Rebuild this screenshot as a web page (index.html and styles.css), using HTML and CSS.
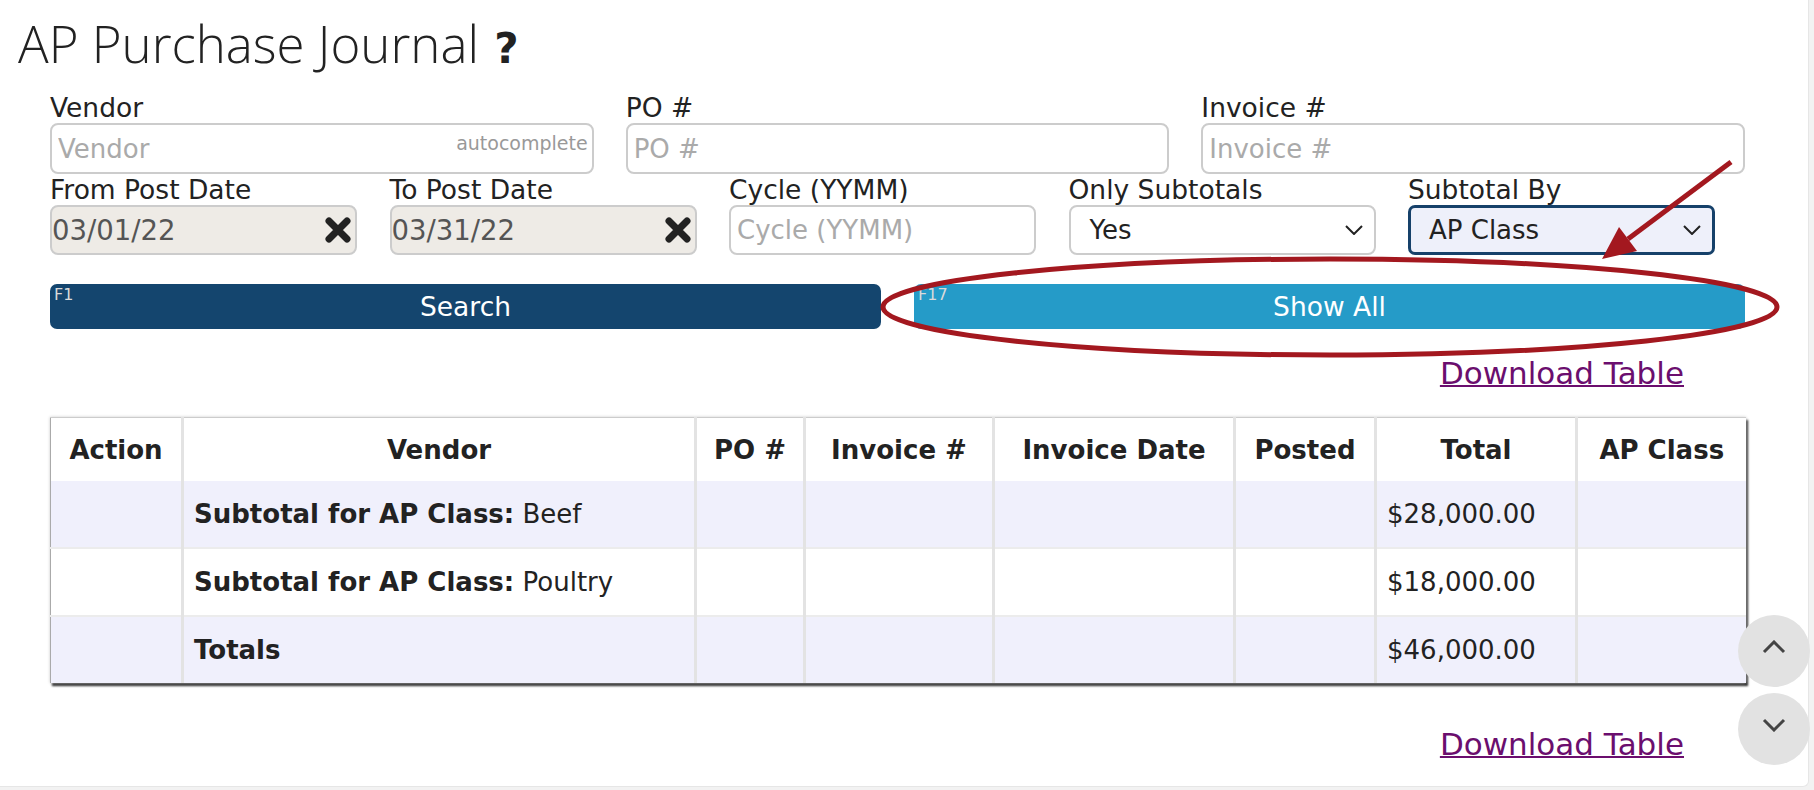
FILE: index.html
```html
<!DOCTYPE html>
<html lang="en">
<head>
    <meta charset="UTF-8">
    <meta name="viewport" content="width=device-width, initial-scale=1.0">
    <title>AP Purchase Journal</title>
    <link rel="stylesheet" href="styles.css">
</head>
<body>
    <div class="page">
        <h1 class="page-title">AP Purchase Journal <span class="help">?</span></h1>

        <form class="filters">
            <div class="row row-3">
                <div class="field">
                    <label for="vendor">Vendor</label>
                    <div class="input-wrap">
                        <input class="input" type="text" id="vendor" placeholder="Vendor">
                        <span class="hint">autocomplete</span>
                    </div>
                </div>
                <div class="field">
                    <label for="po">PO #</label>
                    <input class="input" type="text" id="po" placeholder="PO #">
                </div>
                <div class="field">
                    <label for="invoice">Invoice #</label>
                    <input class="input" type="text" id="invoice" placeholder="Invoice #">
                </div>
            </div>

            <div class="row row-5">
                <div class="field">
                    <label for="from">From Post Date</label>
                    <div class="input-wrap">
                        <input class="input date" type="text" id="from" value="03/01/22">
                        <svg class="clear" width="28" height="26" viewBox="0 0 28 26"><path d="M5 4 L23 22 M23 4 L5 22" stroke="#222" stroke-width="7" stroke-linecap="round"/></svg>
                    </div>
                </div>
                <div class="field">
                    <label for="to">To Post Date</label>
                    <div class="input-wrap">
                        <input class="input date" type="text" id="to" value="03/31/22">
                        <svg class="clear" width="28" height="26" viewBox="0 0 28 26"><path d="M5 4 L23 22 M23 4 L5 22" stroke="#222" stroke-width="7" stroke-linecap="round"/></svg>
                    </div>
                </div>
                <div class="field">
                    <label for="cycle">Cycle (YYMM)</label>
                    <input class="input" type="text" id="cycle" placeholder="Cycle (YYMM)">
                </div>
                <div class="field">
                    <label>Only Subtotals</label>
                    <div class="select">
                        <span>Yes</span>
                        <svg width="18" height="10" viewBox="0 0 18 10"><path d="M1 1 L9 9 L17 1" fill="none" stroke="#222" stroke-width="2"/></svg>
                    </div>
                </div>
                <div class="field">
                    <label>Subtotal By</label>
                    <div class="select select-active">
                        <span>AP Class</span>
                        <svg width="18" height="10" viewBox="0 0 18 10"><path d="M1 1 L9 9 L17 1" fill="none" stroke="#222" stroke-width="2"/></svg>
                    </div>
                </div>
            </div>

            <div class="buttons">
                <button type="button" class="btn btn-search"><span class="key">F1</span>Search</button>
                <button type="button" class="btn btn-show"><span class="key">F17</span>Show All</button>
            </div>
        </form>

        <div class="download"><a href="#">Download Table</a></div>

        <table class="journal">
            <colgroup>
                <col style="width: 132px">
                <col style="width: 513px">
                <col style="width: 109px">
                <col style="width: 189px">
                <col style="width: 241px">
                <col style="width: 141px">
                <col style="width: 201px">
                <col style="width: 169px">
            </colgroup>
            <thead>
                <tr>
                    <th>Action</th>
                    <th>Vendor</th>
                    <th>PO #</th>
                    <th>Invoice #</th>
                    <th>Invoice Date</th>
                    <th>Posted</th>
                    <th>Total</th>
                    <th>AP Class</th>
                </tr>
            </thead>
            <tbody>
                <tr class="shaded">
                    <td></td>
                    <td><b>Subtotal for AP Class:</b> Beef</td>
                    <td></td><td></td><td></td><td></td>
                    <td>$28,000.00</td>
                    <td></td>
                </tr>
                <tr>
                    <td></td>
                    <td><b>Subtotal for AP Class:</b> Poultry</td>
                    <td></td><td></td><td></td><td></td>
                    <td>$18,000.00</td>
                    <td></td>
                </tr>
                <tr class="shaded">
                    <td></td>
                    <td><b>Totals</b></td>
                    <td></td><td></td><td></td><td></td>
                    <td>$46,000.00</td>
                    <td></td>
                </tr>
            </tbody>
        </table>

        <div class="download download-bottom"><a href="#">Download Table</a></div>
    </div>

    <!-- red markup drawn over the screenshot -->
    <svg class="markup" width="1814" height="790" viewBox="0 0 1814 790">
        <ellipse cx="1330" cy="307" rx="447" ry="48" fill="none" stroke="#a3181f" stroke-width="5"/>
        <line x1="1731" y1="162" x2="1628" y2="239" stroke="#a3181f" stroke-width="5"/>
        <polygon points="1602,259 1637,251 1619,227" fill="#a3181f"/>
    </svg>

    <div class="scroll-btns">
        <div class="scroll-btn">
            <svg width="24" height="14" viewBox="0 0 24 14"><path d="M2 12 L12 2 L22 12" fill="none" stroke="#444" stroke-width="3"/></svg>
        </div>
        <div class="scroll-btn">
            <svg width="24" height="14" viewBox="0 0 24 14"><path d="M2 2 L12 12 L22 2" fill="none" stroke="#444" stroke-width="3"/></svg>
        </div>
    </div>
</body>
</html>
```

FILE: styles.css
```css
body {
    margin: 0;
    background-color: #f2f2f2;
    font-family: "DejaVu Sans", Verdana, sans-serif;
    color: #222;
    position: relative;
}

.page {
    background-color: #fff;
    width: 1809px;
    height: 787px;
    box-sizing: border-box;
    padding-top: 7px;
    border-radius: 0 0 6px 0;
    border-right: 1px solid #e6e6e6;
    border-bottom: 1px solid #e6e6e6;
}

.page-title {
    margin: 0 0 8px 18px;
    font-family: "Open Sans", sans-serif;
    font-weight: 300;
    font-size: 51px;
    line-height: 72px;
    color: #222;
}

.help {
    font-family: "DejaVu Sans", sans-serif;
    font-weight: bold;
    font-size: 42px;
    margin-left: 2px;
}

.filters {
    margin: 0 0 0 50px;
    width: 1695px;
}

.row {
    display: grid;
    margin-bottom: 1px;
}

.row-3 {
    grid-template-columns: repeat(3, 1fr);
    column-gap: 32px;
}

.row-5 {
    grid-template-columns: repeat(5, 307px);
    column-gap: 32.5px;
    margin-top: 1px;
}

.field label {
    display: block;
    font-size: 26.5px;
    line-height: 30px;
}

.input-wrap {
    position: relative;
}

.input {
    display: block;
    box-sizing: border-box;
    width: 100%;
    height: 51px;
    margin: 0;
    padding: 0 6px;
    border: 2px solid #ccc;
    border-radius: 8px;
    background-color: #fff;
    font-family: "DejaVu Sans", Verdana, sans-serif;
    font-size: 26px;
    color: #333;
}

.input::placeholder {
    color: #aaa;
}

.row-5 .input,
.select {
    height: 50px;
}

.hint {
    position: absolute;
    right: 6px;
    top: 9px;
    font-size: 19px;
    color: #999;
}

.date {
    background-color: #eeebe6;
    padding-left: 0;
    font-size: 27.5px;
    color: #555;
}

.clear {
    position: absolute;
    right: 5px;
    top: 12px;
}

.select {
    box-sizing: border-box;
    display: flex;
    align-items: center;
    justify-content: space-between;
    padding: 0 11px 0 19px;
    border: 2px solid #ccc;
    border-radius: 8px;
    background-color: #fff;
    font-size: 26px;
}

.select-active {
    border: 3px solid #16416a;
    border-radius: 7px;
    background-color: #eef0fa;
    padding-left: 18px;
}

.buttons {
    display: grid;
    grid-template-columns: 1fr 1fr;
    column-gap: 33px;
    margin-top: 29px;
}

.btn {
    position: relative;
    height: 45px;
    border: 0;
    border-radius: 7px;
    color: #fff;
    font-family: "DejaVu Sans", Verdana, sans-serif;
    font-size: 26.5px;
    padding: 0;
}

.btn-search {
    background-color: #14456e;
}

.btn-show {
    background-color: #259bc8;
}

.key {
    position: absolute;
    left: 4px;
    top: 3px;
    font-size: 16px;
    line-height: 1;
    color: #dadada;
}

.download {
    box-sizing: border-box;
    width: 1695px;
    margin: 26px 0 0 50px;
    padding-right: 61px;
    text-align: right;
    font-size: 31px;
    line-height: 36px;
}

.download a {
    color: #6b0e6e;
    text-decoration-thickness: 2px;
}

.download-bottom {
    margin-top: 43px;
}

.journal {
    margin: 26px 0 0 50px;
    width: 1695px;
    table-layout: fixed;
    border-collapse: collapse;
    border-top: 1px solid #ccc;
    border-left: 1px solid #aaa;
    box-shadow: 0 0 3px #ccc, 2px 3px 2px #222;
    font-size: 26px;
}

.journal th {
    height: 63px;
    padding: 0;
    font-weight: bold;
    text-align: center;
    background-color: #fff;
}

.journal td {
    height: 66px;
    padding: 0 10px;
    background-color: #fff;
}

.journal tr {
    border-bottom: 2px solid #ececec;
}

.journal tr:last-child {
    border-bottom: 0;
}

.journal th + th,
.journal td + td {
    border-left: 3px solid #e3e3e3;
}

.journal .shaded td {
    background-color: #f0f0fc;
}

.markup {
    position: absolute;
    left: 0;
    top: 0;
    pointer-events: none;
}

.scroll-btns {
    position: absolute;
    right: 4px;
    top: 615px;
    display: flex;
    flex-direction: column;
    gap: 6px;
}

.scroll-btn {
    width: 72px;
    height: 72px;
    border-radius: 50%;
    background-color: #e2e2e2;
    display: flex;
    align-items: center;
    justify-content: center;
    padding-bottom: 8px;
    box-sizing: border-box;
}
```
